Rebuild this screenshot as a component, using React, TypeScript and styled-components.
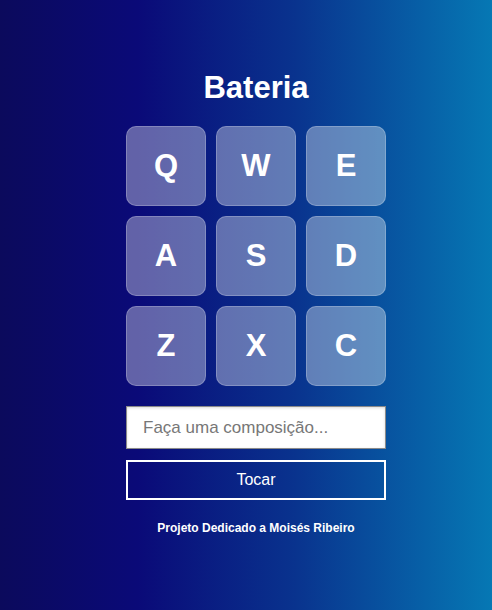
import * as React from 'react'
import styled, { createGlobalStyle } from 'styled-components'

const GlobalStyle = createGlobalStyle`
  html, body {
    margin: 0;
    padding: 0;
  }
  body {
    font-family: 'Liberation Sans', Arial, sans-serif;
  }
`

const Page = styled.div`
  min-height: 610px;
  box-sizing: border-box;
  padding: 69px 0 0 20px;
  display: flex;
  flex-direction: column;
  align-items: center;
  background: linear-gradient(90deg, #0b0a5c 0%, #0a0a78 28%, #09338e 60%, #0678b4 100%);
  color: #fff;
`

const Title = styled.h1`
  margin: 0 0 20px;
  font-size: 31px;
  line-height: 37px;
  font-weight: 700;
`

const Grid = styled.div`
  display: grid;
  grid-template-columns: repeat(3, 80px);
  grid-auto-rows: 80px;
  gap: 10px;
`

const Key = styled.div`
  box-sizing: border-box;
  display: flex;
  align-items: center;
  justify-content: center;
  border-radius: 10px;
  background: rgba(255, 255, 255, 0.36);
  border: 1px solid rgba(255, 255, 255, 0.22);
  font-size: 31px;
  font-weight: 700;
  color: #fff;
`

const Composer = styled.input`
  box-sizing: border-box;
  width: 260px;
  height: 43px;
  margin-top: 20px;
  padding: 0 16px;
  border: 1px solid #8a8a8a;
  background: #fff;
  box-shadow: inset 0 1px 3px rgba(0, 0, 0, 0.15);
  font-family: 'Liberation Sans', Arial, sans-serif;
  font-size: 17px;
  color: #333;
  outline: none;
  &::placeholder {
    color: #777;
  }
`

const PlayButton = styled.button`
  box-sizing: border-box;
  width: 260px;
  height: 40px;
  margin-top: 11px;
  border: 2px solid #fff;
  background: transparent;
  color: #fff;
  font-family: 'Liberation Sans', Arial, sans-serif;
  font-size: 16px;
  cursor: pointer;
`

const Footer = styled.p`
  margin: 21px 0 0;
  font-size: 12px;
  font-weight: 700;
  line-height: 14px;
`

const keys = ['Q', 'W', 'E', 'A', 'S', 'D', 'Z', 'X', 'C']

export default function App() {
  return (
    <Page>
      <GlobalStyle />
      <Title>Bateria</Title>
      <Grid>
        {keys.map(k => (
          <Key key={k}>{k}</Key>
        ))}
      </Grid>
      <Composer placeholder="Faça uma composição..." />
      <PlayButton>Tocar</PlayButton>
      <Footer>Projeto Dedicado a Moisés Ribeiro</Footer>
    </Page>
  )
}
